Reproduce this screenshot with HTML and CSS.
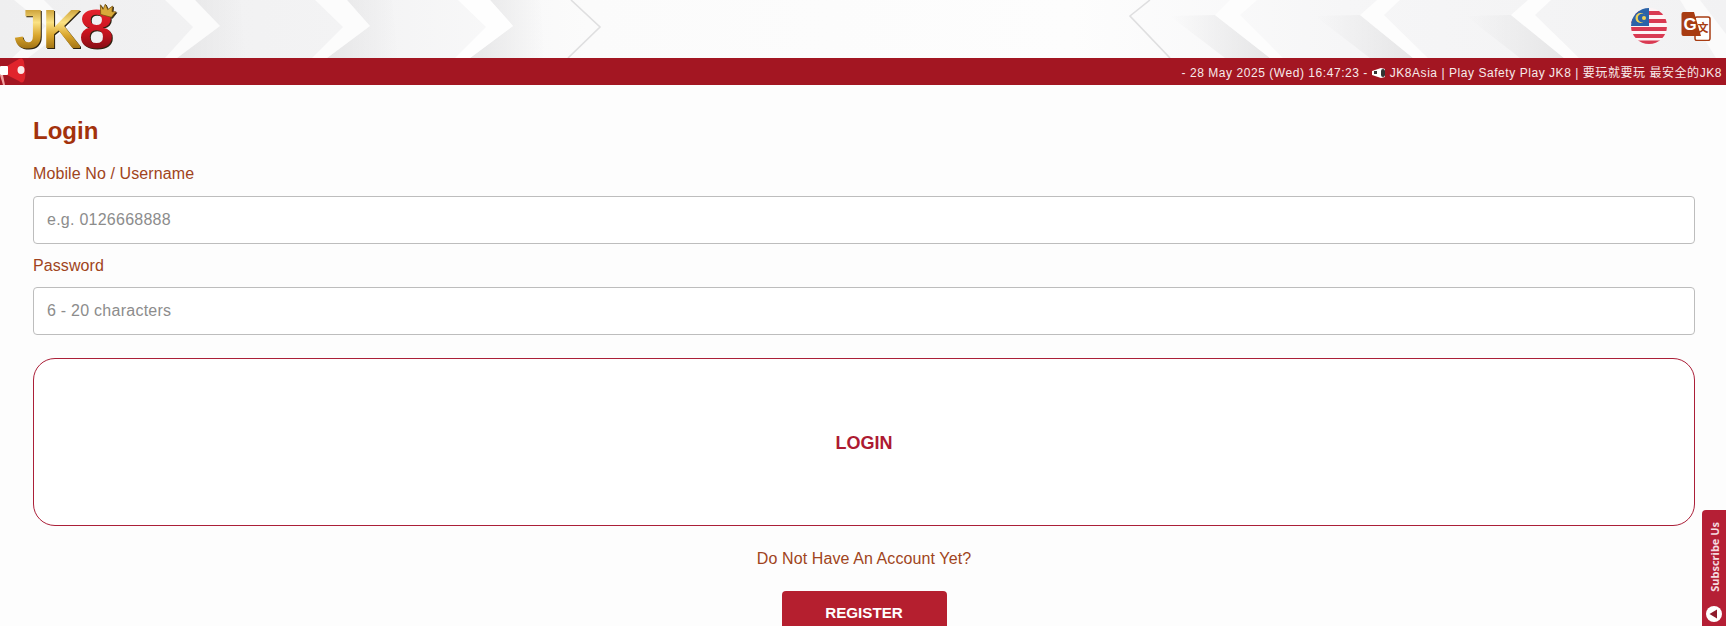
FILE: index.html
```html
<!DOCTYPE html>
<html lang="en">
<head>
<meta charset="utf-8">
<title>JK8 Login</title>
<link rel="stylesheet" href="styles.css">
</head>
<body>
<header class="topbar">
  <svg class="topbar-art" viewBox="0 0 1726 58" preserveAspectRatio="none" aria-hidden="true">
    <defs>
      <linearGradient id="shadeL" x1="0" x2="1" y1="0" y2="0"><stop offset="0" stop-color="#e6e6e7"/><stop offset="1" stop-color="#e6e6e7" stop-opacity="0"/></linearGradient>
      <linearGradient id="shadeR" x1="1" x2="0" y1="0" y2="0"><stop offset="0" stop-color="#e6e6e7"/><stop offset="1" stop-color="#e6e6e7" stop-opacity="0"/></linearGradient>
      <linearGradient id="baseFade" x1="0" x2="1" y1="0" y2="0"><stop offset="0" stop-color="#efeff0"/><stop offset="0.2" stop-color="#f3f3f4"/><stop offset="0.34" stop-color="#fbfbfb"/><stop offset="0.62" stop-color="#fdfdfd"/><stop offset="0.78" stop-color="#f6f6f7"/><stop offset="1" stop-color="#f2f2f3"/></linearGradient>
    </defs>
    <rect width="1726" height="58" fill="url(#baseFade)"/>
    <polygon points="14,0 44,0 70,26 28,58 12,58 46,26" fill="#fafafa"/>

    <polygon points="195,0 240,0 246,58 177,58 220,26" fill="url(#shadeL)"/>
    <polygon points="165,0 195,0 220,26 177,58 165,58 193,27" fill="#fbfbfb"/>

    <polygon points="347,0 392,0 398,58 327,58 370,26" fill="url(#shadeL)"/>
    <polygon points="315,0 347,0 370,26 327,58 312,58 343,27" fill="#fcfcfc"/>

    <polygon points="490,0 540,0 545,58 470,58 513,26" fill="url(#shadeL)"/>
    <polygon points="458,0 490,0 513,26 470,58 455,58 486,27" fill="#fefefe"/>

    <polyline points="571,0 600,27 568,58" fill="none" stroke="#dfdfe0" stroke-width="1.6"/>
    <polyline points="1150,0 1130,16 1170,58" fill="none" stroke="#dfdfe0" stroke-width="1.6"/>

    <polygon points="1170,16 1215,15 1270,58 1225,58" fill="url(#shadeR)"/>
    <polygon points="1230,0 1257,0 1240,15 1283,58 1270,58 1215,15" fill="#fdfdfd"/>

    <polygon points="1315,16 1360,15 1413,58 1370,58" fill="url(#shadeR)"/>
    <polygon points="1377,0 1400,0 1384,15 1428,58 1413,58 1360,15" fill="#fdfdfd"/>

    <polygon points="1466,16 1511,15 1564,58 1520,58" fill="url(#shadeR)"/>
    <polygon points="1528,0 1551,0 1535,15 1579,58 1564,58 1511,15" fill="#fdfdfd"/>

    <polygon points="1680,0 1700,0 1726,34 1726,58 1716,58" fill="#fbfbfb"/>
  </svg>
  <a class="logo" href="#">
    <span class="logo-jk">JK</span><span class="logo-eight">8</span>
    <svg class="logo-crown" viewBox="0 0 20 14" aria-hidden="true">
      <path d="M1 3 5 7 6 1 10 6 14 1 15 7 19 6 16 13 4 13Z" fill="#d9a93a" stroke="#7a5510" stroke-width=".8"/>
    </svg>
  </a>
  <div class="topbar-actions">
    <svg class="flag" viewBox="0 0 36 36" aria-label="Malaysia">
      <defs><clipPath id="flagClip"><circle cx="18" cy="18" r="18"/></clipPath></defs>
      <g clip-path="url(#flagClip)">
        <rect width="36" height="36" fill="#fdf4f5"/>
        <rect x="0" y="3" width="36" height="4" fill="#d93a52"/>
        <rect x="0" y="11" width="36" height="4" fill="#d93a52"/>
        <rect x="0" y="19" width="36" height="4" fill="#d93a52"/>
        <rect x="0" y="26" width="36" height="4" fill="#d93a52"/>
        <rect x="0" y="32.500" width="36" height="4" fill="#d93a52"/>
        <rect width="18" height="18" fill="#2b63a8"/>
        <circle cx="9.500" cy="10" r="5" fill="#f0d257"/>
        <circle cx="11" cy="10" r="4.200" fill="#2b63a8"/>
        <circle cx="13" cy="10" r="2" fill="#f0d257"/>
      </g>
    </svg>
    <svg class="translate" viewBox="0 0 30 30" aria-label="Translate">
      <rect x="14" y="6" width="15" height="23.500" rx="2" fill="#fff" stroke="#a83c12" stroke-width="1.500"/>
      <path d="M2.500 1H13l7 24H2.500A2 2 0 0 1 .5 23V3A2 2 0 0 1 2.500 1Z" fill="#a83c12"/>
      <text class="translate-g" x="2.500" y="19">G</text>
      <text class="translate-x" x="16.500" y="21">文</text>
    </svg>
  </div>
</header>

<div class="ticker">
  <svg class="ticker-horn" viewBox="0 0 26 27" aria-hidden="true">
    <path d="M3 17 5 27H3L0 17Z" fill="#f0a0a0"/>
    <path d="M7 8 19 1Q23-1 24 4L25 12Q26 20 24 23 22 26 19 23L7 17Z" fill="#e0242c"/>
    <ellipse cx="21" cy="12" rx="3.500" ry="4" fill="#fbeaea"/>
    <rect x="0" y="8" width="8" height="9" rx="1" fill="#fff"/>
  </svg>
  <p class="ticker-text">- 28 May 2025 (Wed) 16:47:23 - <svg class="ticker-mini" viewBox="0 0 14 12" aria-hidden="true"><path d="M0 4 9 1 13 2V10L9 11 0 8Z" fill="#fff"/><rect x="9" y="2" width="4" height="8" rx="2" fill="#333"/><rect x="2" y="4" width="3" height="3" fill="#333"/></svg> JK8Asia | Play Safety Play JK8 | 要玩就要玩 最安全的JK8</p>
</div>

<main class="login">
  <h1 class="login-title">Login</h1>
  <form class="login-form">
    <label class="field-label" for="user">Mobile No / Username</label>
    <input class="field-input" id="user" type="text" placeholder="e.g. 0126668888">
    <label class="field-label field-label-next" for="pass">Password</label>
    <input class="field-input" id="pass" type="password" placeholder="6 - 20 characters">
    <button class="btn-login" type="button">LOGIN</button>
  </form>
  <p class="login-hint">Do Not Have An Account Yet?</p>
  <a class="btn-register" href="#">REGISTER</a>
</main>

<aside class="subscribe">
  <span class="subscribe-text">Subscribe Us</span>
  <svg class="subscribe-icon" viewBox="0 0 18 18" aria-hidden="true">
    <circle cx="9" cy="9" r="8" fill="#fff"/>
    <path d="M4.500 9 12 4.500V13.500Z" fill="#8e1a2c"/>
  </svg>
</aside>
</body>
</html>
```

FILE: styles.css
```css
* { box-sizing: border-box; }
html, body { height: 100%; overflow: hidden; }
body {
  margin: 0;
  background: #fdfdfd;
  font-family: "Liberation Sans", Arial, sans-serif;
  font-size: 16px;
  letter-spacing: .1px;
  color: #a04420;
}

.topbar {
  position: relative;
  height: 58px;
  display: flex;
  align-items: center;
  justify-content: space-between;
  padding: 0 15px;
}
.topbar-art { position: absolute; inset: 0; width: 100%; height: 100%; }

.logo {
  position: relative;
  display: flex;
  align-items: center;
  height: 58px;
  margin-left: -1px;
  text-decoration: none;
  font-family: "Liberation Sans", sans-serif;
  font-size: 50px;
  font-weight: 700;
  line-height: 1;
  filter: drop-shadow(1px 1px 0 #2b2210);
}
.logo-jk {
  letter-spacing: -2px;
  transform: scale(1.1);
  transform-origin: left center;
  margin-right: 6px;
  background: linear-gradient(180deg, #c79a30 12%, #fbe284 38%, #d9a52c 62%, #96690f 90%);
  -webkit-background-clip: text;
  background-clip: text;
  color: transparent;
}
.logo-eight {
  transform: scale(1.25, 1.1);
  transform-origin: left center;
  margin-left: -1px;
  background: linear-gradient(180deg, #e8242e 10%, #c9141f 55%, #7e0d14 90%);
  -webkit-background-clip: text;
  background-clip: text;
  color: transparent;
}
.logo-crown { position: absolute; left: 84px; top: 4px; width: 19px; height: 13px; transform: rotate(15deg); }

.topbar-actions { position: relative; display: flex; align-items: center; gap: 14px; margin-bottom: 6px; }
.flag { width: 36px; height: 36px; display: block; }
.translate { width: 30px; height: 30px; display: block; }
.translate-g { font: 700 17px "Liberation Sans", sans-serif; fill: #fff; }
.translate-x { font: 700 11px "Noto Sans CJK SC", sans-serif; fill: #a83c12; }

.ticker {
  height: 27px;
  background: #a31622;
  display: flex;
  align-items: center;
  justify-content: space-between;
  padding-right: 4px;
}
.ticker-horn { width: 26px; height: 27px; display: block; }
.ticker-text {
  margin: 0;
  color: #f7eaea;
  font-family: "Liberation Sans", "Noto Sans CJK SC", sans-serif;
  font-size: 12px;
  letter-spacing: .55px;
  white-space: nowrap;
}
.ticker-mini { width: 14px; height: 12px; vertical-align: -2px; }

.login { padding: 32px 31px 0 33px; display: flex; flex-direction: column; }
.login-title {
  margin: 0 0 18px;
  font-size: 24px;
  line-height: 28px;
  font-weight: 700;
  letter-spacing: 0;
  color: #a3320c;
}
.login-form { display: flex; flex-direction: column; }
.field-label { line-height: 22px; margin-bottom: 11px; }
.field-label-next { margin-top: 11px; margin-bottom: 10px; }
.field-input {
  height: 48px;
  padding: 0 13px;
  border: 1px solid #bdbdbd;
  border-radius: 4px;
  background: #fff;
  font: 16px "Liberation Sans", Arial, sans-serif;
  letter-spacing: .25px;
}
.field-input::placeholder { color: #8c8c8c; opacity: 1; }
.btn-login {
  height: 168px;
  margin-top: 23px;
  padding: 2px 0 0;
  border: 1px solid #ab1f38;
  border-radius: 22px;
  background: #fff;
  color: #ad1a32;
  font: 700 18px "Liberation Sans", Arial, sans-serif;
}
.login-hint { margin: 23px 0 0; line-height: 20px; text-align: center; }
.btn-register {
  align-self: center;
  width: 165px;
  height: 60px;
  margin-top: 22px;
  padding-top: 13px;
  border-radius: 4px;
  background: #b51f2f;
  color: #fff;
  font-size: 15.200px;
  font-weight: 700;
  line-height: 18px;
  letter-spacing: 0;
  text-align: center;
  text-decoration: none;
}

.subscribe {
  position: fixed;
  right: 0;
  bottom: 0;
  width: 24px;
  height: 116px;
  display: flex;
  flex-direction: column;
  align-items: center;
  justify-content: space-between;
  padding: 12px 0 3px;
  border-radius: 4px 0 0 0;
  background: #b51f35;
}
.subscribe-text {
  writing-mode: vertical-rl;
  transform: rotate(180deg);
  font: 700 11px "Open Sans", sans-serif;
  letter-spacing: 0;
  color: #f4dbe0;
  white-space: nowrap;
}
.subscribe-icon { width: 18px; height: 18px; display: block; }
```
